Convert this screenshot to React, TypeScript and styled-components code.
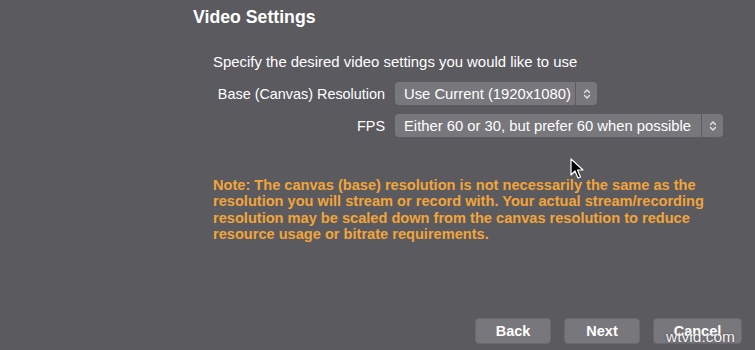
import React from "react";
import styled, { createGlobalStyle } from "styled-components";

const GlobalStyle = createGlobalStyle`
	html, body {
		margin: 0;
		padding: 0;
		background: #5b5a5f;
	}
	body {
		font-family: "Liberation Sans", Arial, sans-serif;
		-webkit-font-smoothing: antialiased;
	}
`;

const Page = styled.div`
	position: relative;
	width: 755px;
	height: 350px;
	box-sizing: border-box;
	display: flex;
	flex-direction: column;
	background: #5b5a5f;
	color: #ffffff;
	overflow: hidden;
`;

const Title = styled.h1`
	margin: 0;
	padding: 7px 0 0 193px;
	font-size: 17.7px;
	line-height: 21px;
	font-weight: 700;
`;

const Content = styled.div`
	padding: 25px 0 0 213px;
	display: flex;
	flex-direction: column;
`;

const Intro = styled.p`
	margin: 0;
	font-size: 14.9px;
	line-height: 18px;
`;

const Form = styled.div`
	display: grid;
	grid-template-columns: 172px auto;
	column-gap: 10px;
	row-gap: 9px;
	margin-top: 11px;
	justify-content: start;
	align-items: center;
`;

const Label = styled.label`
	font-size: 14.4px;
	text-align: right;
`;

const Select = styled.div<{ $width: number }>`
	display: flex;
	width: ${(p) => p.$width}px;
	height: 23px;
	border-radius: 4px;
	background: #78777c;
	overflow: hidden;
	font-size: 14.8px;
`;

const SelectValue = styled.div`
	flex: 1;
	display: flex;
	align-items: center;
	padding-left: 9px;
	white-space: nowrap;
`;

const SelectArrow = styled.div`
	width: 21px;
	display: flex;
	align-items: center;
	justify-content: center;
	border-left: 1px solid #5e5d62;
`;

const Note = styled.p`
	margin: 40px 0 0;
	width: 520px;
	font-size: 14.6px;
	line-height: 16.4px;
	font-weight: 700;
	color: #f1a53a;
`;

const Footer = styled.div`
	margin-top: auto;
	display: flex;
	justify-content: flex-end;
	gap: 13px;
	padding: 0 13px 6px 0;
`;

const Button = styled.button<{ $width: number }>`
	width: ${(p) => p.$width}px;
	height: 26px;
	border: 1px solid #6a696e;
	border-radius: 4px;
	background: #78777c;
	color: #ffffff;
	font-family: inherit;
	font-size: 14.5px;
	font-weight: 700;
	padding: 0;
`;

const Watermark = styled.span`
	position: absolute;
	right: 20px;
	bottom: 4px;
	font-size: 15.5px;
	color: #f4f4f4;
	text-shadow: 0 0 2px rgba(0, 0, 0, 0.5);
`;

const Cursor = styled.svg`
	position: absolute;
	left: 570px;
	top: 158px;
`;

const Chevrons = () => (
	<svg width="8" height="12" viewBox="0 0 8 12" fill="none">
		<path d="M1.5 4.5 L4 2 L6.5 4.5" stroke="#e8e8ea" strokeWidth="1.3" strokeLinecap="round" strokeLinejoin="round" />
		<path d="M1.5 7.5 L4 10 L6.5 7.5" stroke="#e8e8ea" strokeWidth="1.3" strokeLinecap="round" strokeLinejoin="round" />
	</svg>
);

const App: React.FC = () => {
	return (
		<React.Fragment>
			<GlobalStyle />
			<Page>
				<Title>Video Settings</Title>
				<Content>
					<Intro>Specify the desired video settings you would like to use</Intro>
					<Form>
						<Label>Base (Canvas) Resolution</Label>
						<Select $width={202}>
							<SelectValue>Use Current (1920x1080)</SelectValue>
							<SelectArrow>
								<Chevrons />
							</SelectArrow>
						</Select>
						<Label>FPS</Label>
						<Select $width={328}>
							<SelectValue>Either 60 or 30, but prefer 60 when possible</SelectValue>
							<SelectArrow>
								<Chevrons />
							</SelectArrow>
						</Select>
					</Form>
					<Note>
						Note: The canvas (base) resolution is not necessarily the same as the
						resolution you will stream or record with. Your actual stream/recording
						resolution may be scaled down from the canvas resolution to reduce
						resource usage or bitrate requirements.
					</Note>
				</Content>
				<Footer>
					<Button type="button" $width={76}>Back</Button>
					<Button type="button" $width={76}>Next</Button>
					<Button type="button" $width={89}>Cancel</Button>
				</Footer>
				<Watermark>wtvid.com</Watermark>
				<Cursor width="14" height="22" viewBox="0 0 14 22">
					<path d="M1 1 L1 17 L5 13 L8 20 L10.5 19 L7.5 12 L13 12 Z" fill="#000" stroke="#fff" strokeWidth="1.2" strokeLinejoin="round" />
				</Cursor>
			</Page>
		</React.Fragment>
	);
};

export default App;
